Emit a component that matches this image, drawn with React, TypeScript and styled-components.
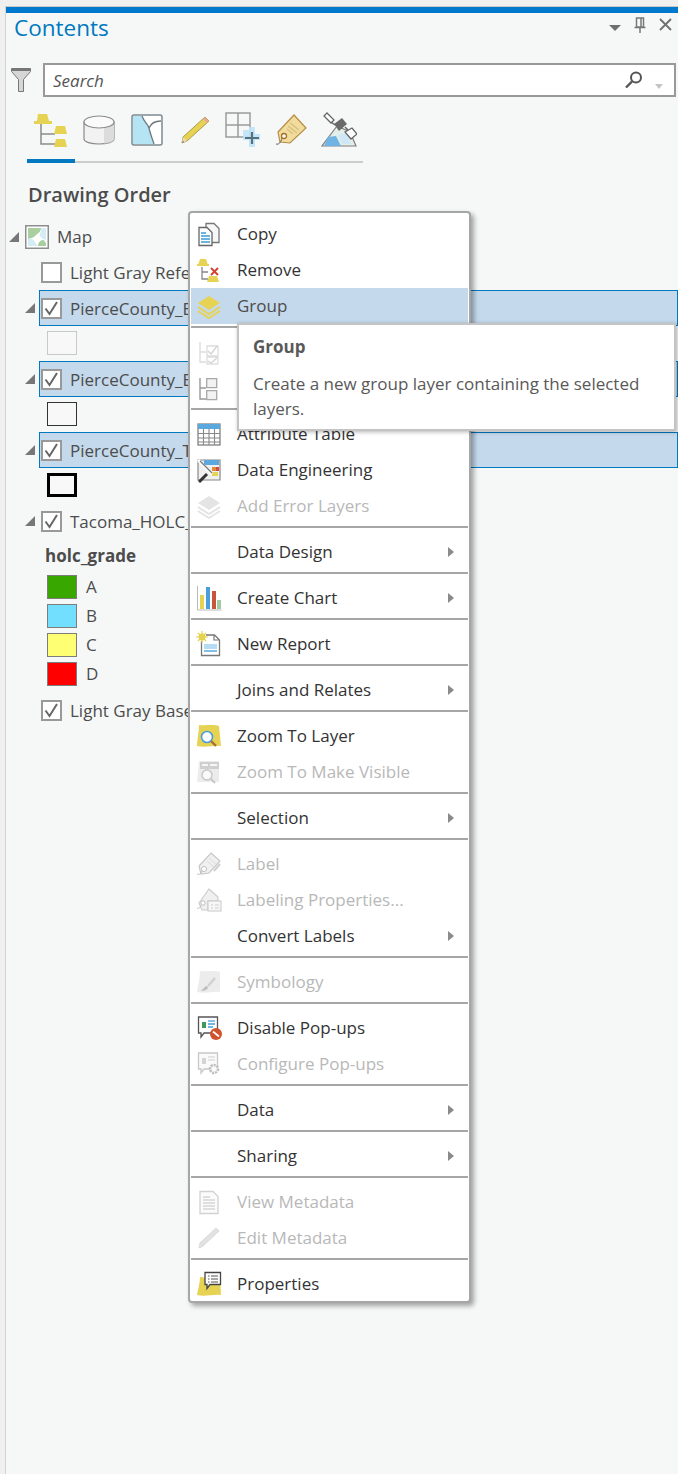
import React from "react";
import styled, { createGlobalStyle } from "styled-components";

const GlobalStyle = createGlobalStyle`
  html, body {
    margin: 0;
    padding: 0;
    background: #f0f0f0;
  }
  * {
    box-sizing: border-box;
  }
`;

const FONT = `"Open Sans", "Noto Sans", "Liberation Sans", sans-serif`;

const Icon = ({ size = 26, children }: { size?: number; children: React.ReactNode }) => (
  <svg width={size} height={size} viewBox={`0 0 ${size} ${size}`} fill="none">
    {children}
  </svg>
);

/* ---- panel + tab icons ---- */
const FilterIcon = () => (
  <svg width="20" height="24" viewBox="0 0 20 24">
    <path d="M0.5 0.5h19v3l-7 8v12h-5v-12l-7-8z" fill="#d6d6d6" stroke="#777" />
    <path d="M1 1h18v2H1z" fill="#777" />
  </svg>
);
const DrawingOrderTab = () => (
  <Icon size={34}>
    <path d="M4 1h9l2 7H3z" fill="#e6d253" />
    <path d="M0 9.500h18" stroke="#e6d253" strokeWidth="3" />
    <path d="M7 11v20h14M7 21h14" stroke="#8a8a8a" strokeWidth="1.500" />
    <path d="M22 13h9l2 8H20z" fill="#e6d253" />
    <path d="M22 26h9l2 8H20z" fill="#e6d253" />
  </Icon>
);
const DatabaseTab = () => (
  <Icon size={32}>
    <path d="M1 8v17c0 3 7 5 15 5s15-2 15-5V8z" fill="#f2f2f2" stroke="#8a8a8a" strokeWidth="1.200" />
    <path d="M21 13.500l10-3V25c0 2-4 4-10 4.500z" fill="#dcdcdc" />
    <ellipse cx="16" cy="8" rx="15" ry="6" fill="#fafafa" stroke="#8a8a8a" strokeWidth="1.200" />
  </Icon>
);
const SourceTab = () => (
  <Icon size={32}>
    <rect x="1" y="1" width="30" height="30" rx="2" fill="#fff" stroke="#7d8a90" strokeWidth="1.500" />
    <path d="M2 2h9c2 6 6 8 7 12 1 5 3 10 5 16H2z" fill="#b5e5f5" />
    <path d="M11 2c2 6 6 8 7 12 1 5 3 10 5 16M18 14c2-5 7-7 12-7" stroke="#6f7a80" strokeWidth="1.300" />
  </Icon>
);
const PencilTab = () => (
  <Icon size={32}>
    <path d="M26 3l4 4L8 27l-5 2 1-6z" fill="#e6d253" stroke="#9a8a30" strokeWidth="0.800" />
    <path d="M26 3l4 4-2 2-4-4z" fill="#e8a898" />
    <path d="M3 29l1-6 4 4z" fill="#e8dcc0" />
    <path d="M3 29l1-2 1 1z" fill="#555" />
  </Icon>
);
const SnapTab = () => (
  <Icon size={36}>
    <path d="M1 1h24v24H1zM13 1v24M1 13h24" stroke="#9a9a9a" strokeWidth="1.500" />
    <path d="M18 18h6v-3h6v7h5v6h-5v7h-6v-7h-6z" fill="#bfe3f7" opacity="0.900" />
    <path d="M27 20v12M20 26h14" stroke="#55707f" strokeWidth="2.200" />
  </Icon>
);
const TagTab = () => (
  <Icon size={32}>
    <path d="M19 1l12 13-16 15-10-1-2-10z" fill="#f1dc9d" stroke="#b78d45" strokeWidth="1.200" />
    <path d="M15 9l9 7M13 12l9 7M12 15l6 5" stroke="#d6bd7a" strokeWidth="1.100" />
    <circle cx="9" cy="22" r="2.500" fill="#fff" stroke="#a66f2a" strokeWidth="1.300" />
    <path d="M7 24c-1 4-3 7-6 6" stroke="#666" strokeWidth="1" />
  </Icon>
);
const SatelliteTab = () => (
  <Icon size={36}>
    <path d="M16 14L1 34h34l-6-14z" fill="#e4eee9" stroke="#7d7d7d" strokeWidth="1.200" />
    <path d="M7 25l8-1 5 10H3z" fill="#6fb4e4" />
    <path d="M17 23l9-2 4 11H21z" fill="#cfe7f7" />
    <path d="M6 1l7 7-3 3-7-7zM24 20l7-4 5 6-6 5z" fill="#fff" stroke="#666" strokeWidth="1.300" />
    <path d="M13 12l8-6 5 6-8 7z" fill="#6a6a6a" />
    <path d="M10 10l4 3M24 15l3 3" stroke="#666" strokeWidth="1.500" />
  </Icon>
);
const MapThumb = () => (
  <svg width="24" height="24" viewBox="0 0 24 24">
    <rect x="0.750" y="0.750" width="22.500" height="22.500" fill="#fff" stroke="#8e8e8e" strokeWidth="1.500" />
    <path d="M3 3h13c0 4-3 5-5 7s-3 3-8 4z" fill="#a9cfa0" />
    <path d="M13 21c0-4 3-6 5-6s2 3 3 3v3z" fill="#a9cfa0" />
    <path d="M16 3h5v12c-3-1-5-2-6-4s2-4 1-8zM3 14c4-1 5 0 7 3s2 3 3 4H3z" fill="#d3ecf5" />
  </svg>
);
const CheckMark = () => (
  <svg width="17" height="17" viewBox="0 0 17 17">
    <path d="M2.500 8.500l4 5.500 7.500-12" fill="none" stroke="#666" strokeWidth="2" />
  </svg>
);

/* ---- context menu icons ---- */
const CopyIcon = () => (
  <Icon>
    <path d="M10 2.500h8l5 5v14h-13z" fill="#f7f7f7" stroke="#777" strokeWidth="1.300" />
    <path d="M3 6.500h8l5 5v13H3z" fill="#fff" stroke="#666" strokeWidth="1.300" />
    <path d="M5 12h5M5 15h9M5 18h9M5 21h9" stroke="#3d9ad6" strokeWidth="1.300" />
  </Icon>
);
const RemoveIcon = () => (
  <Icon>
    <path d="M4 2h6l2 6H2z" fill="#e6d253" />
    <path d="M1 8h12" stroke="#e6d253" strokeWidth="2" />
    <path d="M6 10v12h6M6 15h6" stroke="#888" strokeWidth="1.300" />
    <path d="M13 19h8l2 6H11z" fill="#e6d253" />
    <path d="M15 11l7 7M22 11l-7 7" stroke="#d23f2e" strokeWidth="1.800" />
  </Icon>
);
const LayersIcon = ({ muted }: { muted?: boolean }) => {
  const c = muted ? "#e4e4e4" : "#e6d253";
  return (
    <Icon>
      <path d="M13 3l11 7-11 7-11-7z" fill={c} />
      <path d="M2 14l11 7 11-7M2 18l11 7 11-7" stroke={c} strokeWidth="2" />
    </Icon>
  );
};
const CheckTreeIcon = () => (
  <Icon>
    <path d="M4 3v20h6M4 13h6" stroke="#ddd" strokeWidth="1.400" />
    <path d="M11 7h11v10H11zM11 18h11v7H11z" stroke="#ddd" strokeWidth="1.300" />
    <path d="M12 12l3 3 6-8M12 22l3 2 6-5" stroke="#d2d2d2" strokeWidth="1.300" />
  </Icon>
);
const BoxTreeIcon = () => (
  <Icon>
    <path d="M4 3v21h6M4 13h6" stroke="#999" strokeWidth="1.400" />
    <path d="M10.700 3.700h10v9h-10zM10.700 15.700h10v9h-10z" stroke="#a8a8a8" strokeWidth="1.300" fill="#f2f2f2" />
  </Icon>
);
const TableIcon = () => (
  <Icon>
    <rect x="2" y="3" width="22" height="21" fill="#fff" stroke="#777" strokeWidth="1.200" />
    <path d="M2 3h22v5H2z" fill="#5aa8dd" />
    <path d="M2 12.500h22M2 17h22M2 21h22M7.500 8v16M13 8v16M18.500 8v16" stroke="#888" strokeWidth="1.100" />
  </Icon>
);
const DataEngineeringIcon = () => (
  <Icon>
    <path d="M2 3h22v20H2z" fill="#eef1ef" stroke="#888" strokeWidth="1.200" />
    <path d="M8 3h15v5H8z" fill="#5aa8dd" />
    <path d="M16 10h4v4h-4z" fill="#e08a3c" />
    <path d="M20 10h3v4h-3z" fill="#d5483a" />
    <path d="M16 15h6v4h-6z" fill="#e6d253" />
    <path d="M2 3l14 14" stroke="#fff" strokeWidth="3" />
    <path d="M4 4l12 12" stroke="#777" strokeWidth="1.200" />
    <path d="M11 17l-8 8" stroke="#333" strokeWidth="3" />
  </Icon>
);
const ChartIcon = () => (
  <Icon>
    <path d="M1.500 1v24h24" stroke="#bbb" strokeWidth="1" />
    <path d="M4 10h4v14H4z" fill="#e6d253" />
    <path d="M10 2h4v22h-4z" fill="#4a9fdc" />
    <path d="M16 6h4v18h-4z" fill="#c8563c" />
    <path d="M21 15h4v9h-4z" fill="#a3c9a0" />
  </Icon>
);
const ReportIcon = () => (
  <Icon>
    <path d="M5 9h13l5 0v15H5z" fill="#fff" />
    <path d="M5.500 10v14.500h18V9l-5-5H10" stroke="#777" strokeWidth="1.300" />
    <path d="M8 13h13v5H8z" fill="#b5dcf4" />
    <path d="M8 20h13" stroke="#5aa8dd" strokeWidth="1.500" />
    <path d="M18 4v5h5" stroke="#777" strokeWidth="1.200" />
    <circle cx="6" cy="6" r="3.500" fill="#e6d253" />
    <path d="M6 0v12M0 6h12M2 2l8 8M10 2l-8 8" stroke="#e6d253" strokeWidth="1.200" />
  </Icon>
);
const ZoomLayerIcon = () => (
  <Icon>
    <path d="M3 2c7 1 14-1 20 1l2 20c-7-1-16 2-24 0 0-7 2-14 2-21z" fill="#e6d253" />
    <circle cx="11" cy="14" r="5.500" fill="#fff" stroke="#4a9fdc" strokeWidth="1.600" />
    <path d="M15 18l5 5" stroke="#a5703a" strokeWidth="2.400" />
  </Icon>
);
const ZoomVisibleIcon = () => (
  <Icon>
    <path d="M3 2h20v21H1z" fill="#ececec" />
    <path d="M4 3h19v7H4z" fill="#cfcfcf" />
    <path d="M6 6h6M14 6h7" stroke="#f6f6f6" strokeWidth="2" />
    <circle cx="11" cy="16" r="5" fill="#fafafa" stroke="#c6c6c6" strokeWidth="1.400" />
    <path d="M15 20l4 4" stroke="#c6c6c6" strokeWidth="2" />
  </Icon>
);
const LabelIcon = () => (
  <Icon>
    <path d="M15 2l9 8-11 12-8 1-2-8z" fill="#f0f0f0" stroke="#c8c8c8" strokeWidth="1.200" />
    <path d="M13 7l7 6M11 10l7 6" stroke="#dcdcdc" />
    <path d="M18 20l6-7" stroke="#d0d0d0" strokeWidth="2" />
    <circle cx="8" cy="18" r="2.500" fill="#fff" stroke="#c0c0c0" />
    <path d="M6 20c-1 3-3 4-5 3" stroke="#c0c0c0" />
  </Icon>
);
const LabelPropsIcon = () => (
  <Icon>
    <path d="M13 2l9 8v4H12v9H6l-3-7z" fill="#f0f0f0" stroke="#cacaca" strokeWidth="1.100" />
    <circle cx="7" cy="16" r="2.200" fill="#fff" stroke="#c0c0c0" />
    <path d="M5 18c-1 3-2 4-4 3" stroke="#c0c0c0" />
    <rect x="12" y="14" width="13" height="10" fill="#f7f7f7" stroke="#c8c8c8" />
    <path d="M15 18h2M19 18h4M15 21h2M19 21h4" stroke="#cfcfcf" />
  </Icon>
);
const SymbologyIcon = () => (
  <Icon>
    <path d="M4 2c6 1 14-1 20 1l0 20c-7-1-15 2-23 0 1-7 3-14 3-21z" fill="#ececec" />
    <path d="M19 9l-7 8" stroke="#cfcfcf" strokeWidth="2.200" />
    <path d="M11 17c-2 0-3 2-6 5 3 0 6-1 7-3z" fill="#bdbdbd" />
  </Icon>
);
const PopupOffIcon = () => (
  <Icon>
    <path d="M2.500 2h19v16H8l-3 4v-4H2.500z" fill="#fff" stroke="#555" strokeWidth="1.300" />
    <path d="M6 7h4v6H6z" fill="#3f9a5a" />
    <path d="M12 6h7" stroke="#4a9fdc" strokeWidth="1.300" />
    <path d="M12 9h7M12 12h5" stroke="#4a9fdc" strokeWidth="1.300" />
    <circle cx="20" cy="19" r="6" fill="#d0532c" />
    <path d="M17 16.500l6 5" stroke="#fff" strokeWidth="1.700" />
  </Icon>
);
const PopupConfigIcon = () => (
  <Icon>
    <path d="M2.500 2h19v16H8l-3 4v-4H2.500z" fill="#fafafa" stroke="#c8c8c8" strokeWidth="1.300" />
    <path d="M6 7h4v6H6z" fill="#d5d5d5" />
    <path d="M12 6h7M12 9h7" stroke="#ddd" strokeWidth="1.300" />
    <circle cx="18" cy="18" r="4" fill="#f5f5f5" stroke="#bdbdbd" strokeWidth="2.400" strokeDasharray="2 1" />
    <circle cx="18" cy="18" r="1.500" fill="#fff" />
  </Icon>
);
const DocIcon = () => (
  <Icon>
    <path d="M4 2.500h13l5 5v17H4z" fill="#fbfbfb" stroke="#d2d2d2" strokeWidth="1.300" />
    <path d="M7 8h7M7 11h12M7 14h12M7 17h12M7 20h12" stroke="#d6d6d6" strokeWidth="1.300" />
  </Icon>
);
const PencilOffIcon = () => (
  <Icon>
    <path d="M20 3l3 3L7 21l-4 2 1-5z" fill="#e2e2e2" stroke="#dadada" />
  </Icon>
);
const PropertiesIcon = () => (
  <Icon>
    <path d="M4 6c6 1 14 0 20 1l1 17c-8-1-16 2-24 0 1-6 3-12 3-18z" fill="#e6d253" />
    <path d="M9 1.500h15.500v12H14l-3 4v-4H9z" fill="#fff" stroke="#444" strokeWidth="1.300" />
    <path d="M12 5h1.500M15 5h7M12 8h1.500M15 8h7M12 11h1.500M15 11h7" stroke="#555" strokeWidth="1.200" />
  </Icon>
);

type MenuEntry =
  | "sep"
  | { label?: string; icon?: React.ReactNode; disabled?: boolean; submenu?: boolean; active?: boolean };

const menuEntries: MenuEntry[] = [
  { label: "Copy", icon: <CopyIcon /> },
  { label: "Remove", icon: <RemoveIcon /> },
  { label: "Group", icon: <LayersIcon />, active: true },
  "sep",
  { icon: <CheckTreeIcon />, disabled: true },
  { icon: <BoxTreeIcon /> },
  "sep",
  { label: "Attribute Table", icon: <TableIcon /> },
  { label: "Data Engineering", icon: <DataEngineeringIcon /> },
  { label: "Add Error Layers", icon: <LayersIcon muted />, disabled: true },
  "sep",
  { label: "Data Design", submenu: true },
  "sep",
  { label: "Create Chart", icon: <ChartIcon />, submenu: true },
  "sep",
  { label: "New Report", icon: <ReportIcon /> },
  "sep",
  { label: "Joins and Relates", submenu: true },
  "sep",
  { label: "Zoom To Layer", icon: <ZoomLayerIcon /> },
  { label: "Zoom To Make Visible", icon: <ZoomVisibleIcon />, disabled: true },
  "sep",
  { label: "Selection", submenu: true },
  "sep",
  { label: "Label", icon: <LabelIcon />, disabled: true },
  { label: "Labeling Properties...", icon: <LabelPropsIcon />, disabled: true },
  { label: "Convert Labels", submenu: true },
  "sep",
  { label: "Symbology", icon: <SymbologyIcon />, disabled: true },
  "sep",
  { label: "Disable Pop-ups", icon: <PopupOffIcon /> },
  { label: "Configure Pop-ups", icon: <PopupConfigIcon />, disabled: true },
  "sep",
  { label: "Data", submenu: true },
  "sep",
  { label: "Sharing", submenu: true },
  "sep",
  { label: "View Metadata", icon: <DocIcon />, disabled: true },
  { label: "Edit Metadata", icon: <PencilOffIcon />, disabled: true },
  "sep",
  { label: "Properties", icon: <PropertiesIcon /> },
];

const tabs = [
  <DrawingOrderTab />,
  <DatabaseTab />,
  <SourceTab />,
  <PencilTab />,
  <SnapTab />,
  <TagTab />,
  <SatelliteTab />,
];

const legend = [
  { label: "A", color: "#38a800" },
  { label: "B", color: "#73dfff" },
  { label: "C", color: "#ffff73" },
  { label: "D", color: "#ff0000" },
];

const LayerRow = ({ name, checked, selected }: { name: string; checked: boolean; selected?: boolean }) => (
  <TreeRow $height={36}>
    <Expander />
    <LayerBox $selected={selected}>
      <CheckBox>{checked && <CheckMark />}</CheckBox>
      <LayerName>{name}</LayerName>
    </LayerBox>
  </TreeRow>
);

const App = () => (
  <Page>
    <GlobalStyle />
    <Panel>
      <TitleBar>
        <Title>Contents</Title>
        <WindowControls>
          <ControlCaret />
          <svg width="12" height="16" viewBox="0 0 12 16">
            <path d="M2.500 1h7v9h-7zM7 1v9M0.500 10.500h11M6 10.500V16" fill="none" stroke="#777" strokeWidth="1.500" />
          </svg>
          <svg width="13" height="13" viewBox="0 0 13 13">
            <path d="M1 1l11 11M12 1L1 12" stroke="#6f6f6f" strokeWidth="1.800" />
          </svg>
        </WindowControls>
      </TitleBar>
      <SearchRow>
        <FilterIcon />
        <SearchBox>
          <SearchText>Search</SearchText>
          <svg width="19" height="18" viewBox="0 0 19 18">
            <circle cx="12" cy="6.500" r="5" fill="none" stroke="#555" strokeWidth="2" />
            <path d="M8 10.500l-6 6" stroke="#555" strokeWidth="2.400" />
          </svg>
          <SearchCaret />
        </SearchBox>
      </SearchRow>
      <TabStrip>
        {tabs.map((tab, i) => (
          <Tab key={i} $active={i === 0}>{tab}</Tab>
        ))}
      </TabStrip>
      <Heading>Drawing Order</Heading>
      <Tree>
        <TreeRow $height={36} $outer>
          <Expander />
          <MapThumb />
          <MapName>Map</MapName>
        </TreeRow>
        <TreeRow $height={35}>
          <ExpanderGap />
          <LayerBox>
            <CheckBox />
            <LayerName>Light Gray Refe</LayerName>
          </LayerBox>
        </TreeRow>
        <LayerRow name="PierceCounty_B" checked selected />
        <SwatchRow><OutlineSwatch $color="#c8c8c8" $width={1} /></SwatchRow>
        <LayerRow name="PierceCounty_B" checked selected />
        <SwatchRow><OutlineSwatch $color="#333" $width={1.500} /></SwatchRow>
        <LayerRow name="PierceCounty_T" checked selected />
        <SwatchRow><OutlineSwatch $color="#000" $width={3} /></SwatchRow>
        <LayerRow name="Tacoma_HOLC_" checked />
        <FieldName>holc_grade</FieldName>
        {legend.map((item) => (
          <LegendRow key={item.label}>
            <ColorSwatch $color={item.color} />
            <span>{item.label}</span>
          </LegendRow>
        ))}
        <LastRow>
          <ExpanderGap />
          <LayerBox>
            <CheckBox><CheckMark /></CheckBox>
            <LayerName>Light Gray Base</LayerName>
          </LayerBox>
        </LastRow>
      </Tree>
    </Panel>

    <Menu>
      {menuEntries.map((entry, i) =>
        entry === "sep" ? (
          <Separator key={i} />
        ) : (
          <MenuRow key={i} $active={entry.active} $disabled={entry.disabled}>
            <IconSlot>{entry.icon}</IconSlot>
            <MenuLabel>{entry.label}</MenuLabel>
            {entry.submenu && <SubmenuArrow />}
          </MenuRow>
        )
      )}
    </Menu>

    <Tooltip>
      <TooltipTitle>Group</TooltipTitle>
      <TooltipBody>Create a new group layer containing the selected layers.</TooltipBody>
    </Tooltip>
  </Page>
);

const Page = styled.div`
  position: relative;
  width: 678px;
  height: 1474px;
  overflow: hidden;
  padding: 6px 0 0 5px;
  background: #f0f0f0;
  font-family: ${FONT};
`;

const Panel = styled.div`
  height: 100%;
  background: #f6f8f8;
  border-left: 1px solid #d4d4d4;
  border-top: 1px solid #c8c8c8;
`;

const TitleBar = styled.div`
  display: flex;
  align-items: center;
  justify-content: space-between;
  height: 44px;
  padding: 5px 6px 13px 8px;
  border-top: 6px solid #0079cc;
`;

const Title = styled.div`
  font-size: 22.500px;
  line-height: 30px;
  color: #0079c1;
`;

const WindowControls = styled.div`
  display: flex;
  align-items: center;
  gap: 13px;
  margin-top: -7px;
`;

const ControlCaret = styled.span`
  width: 0;
  height: 0;
  margin-top: 7px;
  border-left: 6px solid transparent;
  border-right: 6px solid transparent;
  border-top: 6px solid #6f6f6f;
`;

const SearchRow = styled.div`
  display: flex;
  align-items: center;
  gap: 12px;
  height: 34px;
  margin: 12px 2px 0 5px;
`;

const SearchBox = styled.div`
  display: flex;
  align-items: center;
  flex: 1;
  height: 34px;
  padding: 0 11px 0 8px;
  background: #fff;
  border: 2px solid #999;
`;

const SearchText = styled.span`
  flex: 1;
  font-size: 17px;
  font-style: italic;
  color: #555;
`;

const SearchCaret = styled.span`
  width: 0;
  height: 0;
  margin: 12px 0 0 12px;
  border-left: 4px solid transparent;
  border-right: 4px solid transparent;
  border-top: 5px solid #c4c4c4;
`;

const TabStrip = styled.div`
  display: grid;
  grid-template-columns: repeat(7, 48px);
  height: 66px;
  margin: 0 0 0 21px;
  width: 336px;
  border-bottom: 2px solid #ccc;
`;

const Tab = styled.div<{ $active?: boolean }>`
  display: flex;
  align-items: center;
  justify-content: center;
  height: ${(p) => (p.$active ? "66px" : "64px")};
  padding-top: ${(p) => (p.$active ? "3px" : "1px")};
  border-bottom: ${(p) => (p.$active ? "4px solid #0079c1" : "none")};
  svg {
    display: block;
  }
`;

const Heading = styled.h2`
  margin: 18px 0 0 22px;
  font-size: 20px;
  line-height: 28px;
  font-weight: 600;
  color: #4c4c4c;
`;

const Tree = styled.div`
  display: flex;
  flex-direction: column;
  margin-top: 10px;
  font-size: 17px;
  color: #4c4c4c;
`;

const TreeRow = styled.div<{ $height: number; $outer?: boolean }>`
  display: flex;
  align-items: center;
  height: ${(p) => p.$height}px;
  padding-left: ${(p) => (p.$outer ? "3px" : "19px")};
  ${(p) => p.$outer && "gap: 2px;"}
`;

const Expander = styled.span`
  flex: none;
  width: 0;
  height: 0;
  border-bottom: 10px solid #777;
  border-left: 10px solid transparent;
  margin-right: 4px;
`;

const ExpanderGap = styled.span`
  flex: none;
  width: 14px;
`;

const LayerBox = styled.div<{ $selected?: boolean }>`
  display: flex;
  align-items: center;
  flex: 1;
  height: 36px;
  padding-left: 1px;
  border: 1px solid ${(p) => (p.$selected ? "#0079c1" : "transparent")};
  background: ${(p) => (p.$selected ? "#c4d9ec" : "transparent")};
`;

const CheckBox = styled.span`
  display: flex;
  align-items: center;
  justify-content: center;
  flex: none;
  width: 21px;
  height: 21px;
  background: #fff;
  border: 2px solid #999;
`;

const LayerName = styled.span`
  margin-left: 8px;
  white-space: nowrap;
`;

const MapName = styled.span`
  margin: 0 0 2px 6px;
`;

const SwatchRow = styled.div`
  display: flex;
  align-items: center;
  height: 35px;
  padding: 0 0 2px 41px;
`;

const OutlineSwatch = styled.span<{ $color: string; $width: number }>`
  width: 30px;
  height: 24px;
  background: #f8f8f8;
  border: ${(p) => p.$width}px solid ${(p) => p.$color};
`;

const FieldName = styled.div`
  height: 33px;
  padding-left: 39px;
  font-weight: 700;
  line-height: 33px;
`;

const LegendRow = styled.div`
  display: flex;
  align-items: center;
  gap: 9px;
  height: 29px;
  padding-left: 41px;
`;

const ColorSwatch = styled.span<{ $color: string }>`
  width: 30px;
  height: 24px;
  background: ${(p) => p.$color};
  border: 1px solid #7d7d7d;
`;

const LastRow = styled.div`
  display: flex;
  align-items: center;
  height: 36px;
  margin-top: 4px;
  padding-left: 19px;
`;

const Menu = styled.div`
  position: absolute;
  top: 211px;
  left: 188px;
  width: 283px;
  height: 1092px;
  padding: 3px 1px;
  background: #fff;
  border: 2px solid #a6a6a6;
  border-radius: 4px;
  box-shadow: 3px 3px 5px rgba(0, 0, 0, 0.35);
`;

const MenuRow = styled.div<{ $active?: boolean; $disabled?: boolean }>`
  display: flex;
  align-items: center;
  height: 36px;
  padding: 0 14px 0 5px;
  font-size: 17px;
  background: ${(p) => (p.$active ? "#c4d9ec" : "transparent")};
  color: ${(p) => (p.$disabled ? "#b8b8b8" : p.$active ? "#4c4c4c" : "#333")};
`;

const IconSlot = styled.span`
  display: flex;
  flex: none;
  width: 26px;
  height: 26px;
  margin-right: 15px;
`;

const MenuLabel = styled.span`
  flex: 1;
  line-height: 24px;
  white-space: nowrap;
`;

const SubmenuArrow = styled.span`
  width: 0;
  height: 0;
  border-top: 5px solid transparent;
  border-bottom: 5px solid transparent;
  border-left: 6px solid #8a8a8a;
`;

const Separator = styled.div`
  height: 2px;
  margin: 2px 0 6px;
  background: #a6a6a6;
`;

const Tooltip = styled.div`
  position: absolute;
  top: 323px;
  left: 237px;
  width: 439px;
  height: 108px;
  padding: 9px 14px;
  background: #fff;
  border: 2px solid #c4c4c4;
  box-shadow: 1px 1px 4px rgba(0, 0, 0, 0.3);
  color: #595959;
`;

const TooltipTitle = styled.div`
  font-size: 17px;
  font-weight: 700;
  line-height: 26px;
`;

const TooltipBody = styled.div`
  margin-top: 11px;
  font-size: 17px;
  line-height: 25px;
`;

export default App;
